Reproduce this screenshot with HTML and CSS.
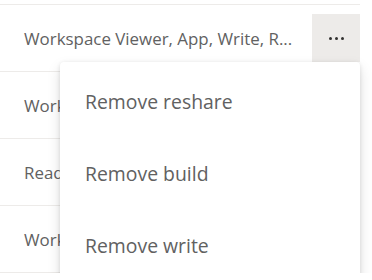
FILE: index.html
```html
<!DOCTYPE html>
<html lang="en">
<head>
    <meta charset="UTF-8">
    <meta name="viewport" content="width=device-width, initial-scale=1.0">
    <title>Permissions</title>
    <link rel="stylesheet" href="styles.css">
</head>
<body>
    <div class="list">
        <div class="row">
            <span class="perm">Workspace Viewer, App, Write, R...</span>
            <div class="more-wrap">
                <button class="more" aria-label="More options">
                    <span class="dot"></span><span class="dot"></span><span class="dot"></span>
                </button>
                <ul class="menu">
                    <li>Remove reshare</li>
                    <li>Remove build</li>
                    <li>Remove write</li>
                </ul>
            </div>
        </div>
        <div class="row">
            <span class="perm">Workspace Viewer, Reshare</span>
        </div>
        <div class="row">
            <span class="perm">Read, Reshare, Build</span>
        </div>
        <div class="row">
            <span class="perm">Workspace Member</span>
        </div>
    </div>
</body>
</html>
```

FILE: styles.css
```css
body {
    margin: 0;
    padding-top: 4px;
    background: white;
    font-family: "Open Sans", "Noto Sans", sans-serif;
    color: #616161;
}
.list {
    width: 360px;
    border-top: 1px solid #edebe9;
}
.row {
    display: flex;
    align-items: center;
    justify-content: space-between;
    height: 66px;
    border-bottom: 1px solid #edebe9;
    padding-left: 24px;
}
.perm {
    font-size: 16.9px;
    white-space: nowrap;
}
.more-wrap {
    position: relative;
    height: 48px;
}
.more {
    width: 48px;
    height: 48px;
    border: none;
    padding: 0;
    background: #edebe9;
    display: flex;
    align-items: center;
    justify-content: center;
    gap: 3px;
}
.dot {
    width: 3px;
    height: 3px;
    border-radius: 50%;
    background: #323130;
}
.menu {
    position: absolute;
    top: 100%;
    right: 0;
    width: 300px;
    height: 214px;
    margin: 0;
    padding: 4px 0 0;
    overflow: hidden;
    list-style: none;
    background: white;
    border-radius: 4px 4px 0 0;
    box-shadow: 0 6px 14px rgba(0,0,0,0.13), 0 1px 4px rgba(0,0,0,0.11);
}
.menu li {
    height: 72px;
    line-height: 72px;
    padding-left: 25px;
    font-size: 19.4px;
}
```
